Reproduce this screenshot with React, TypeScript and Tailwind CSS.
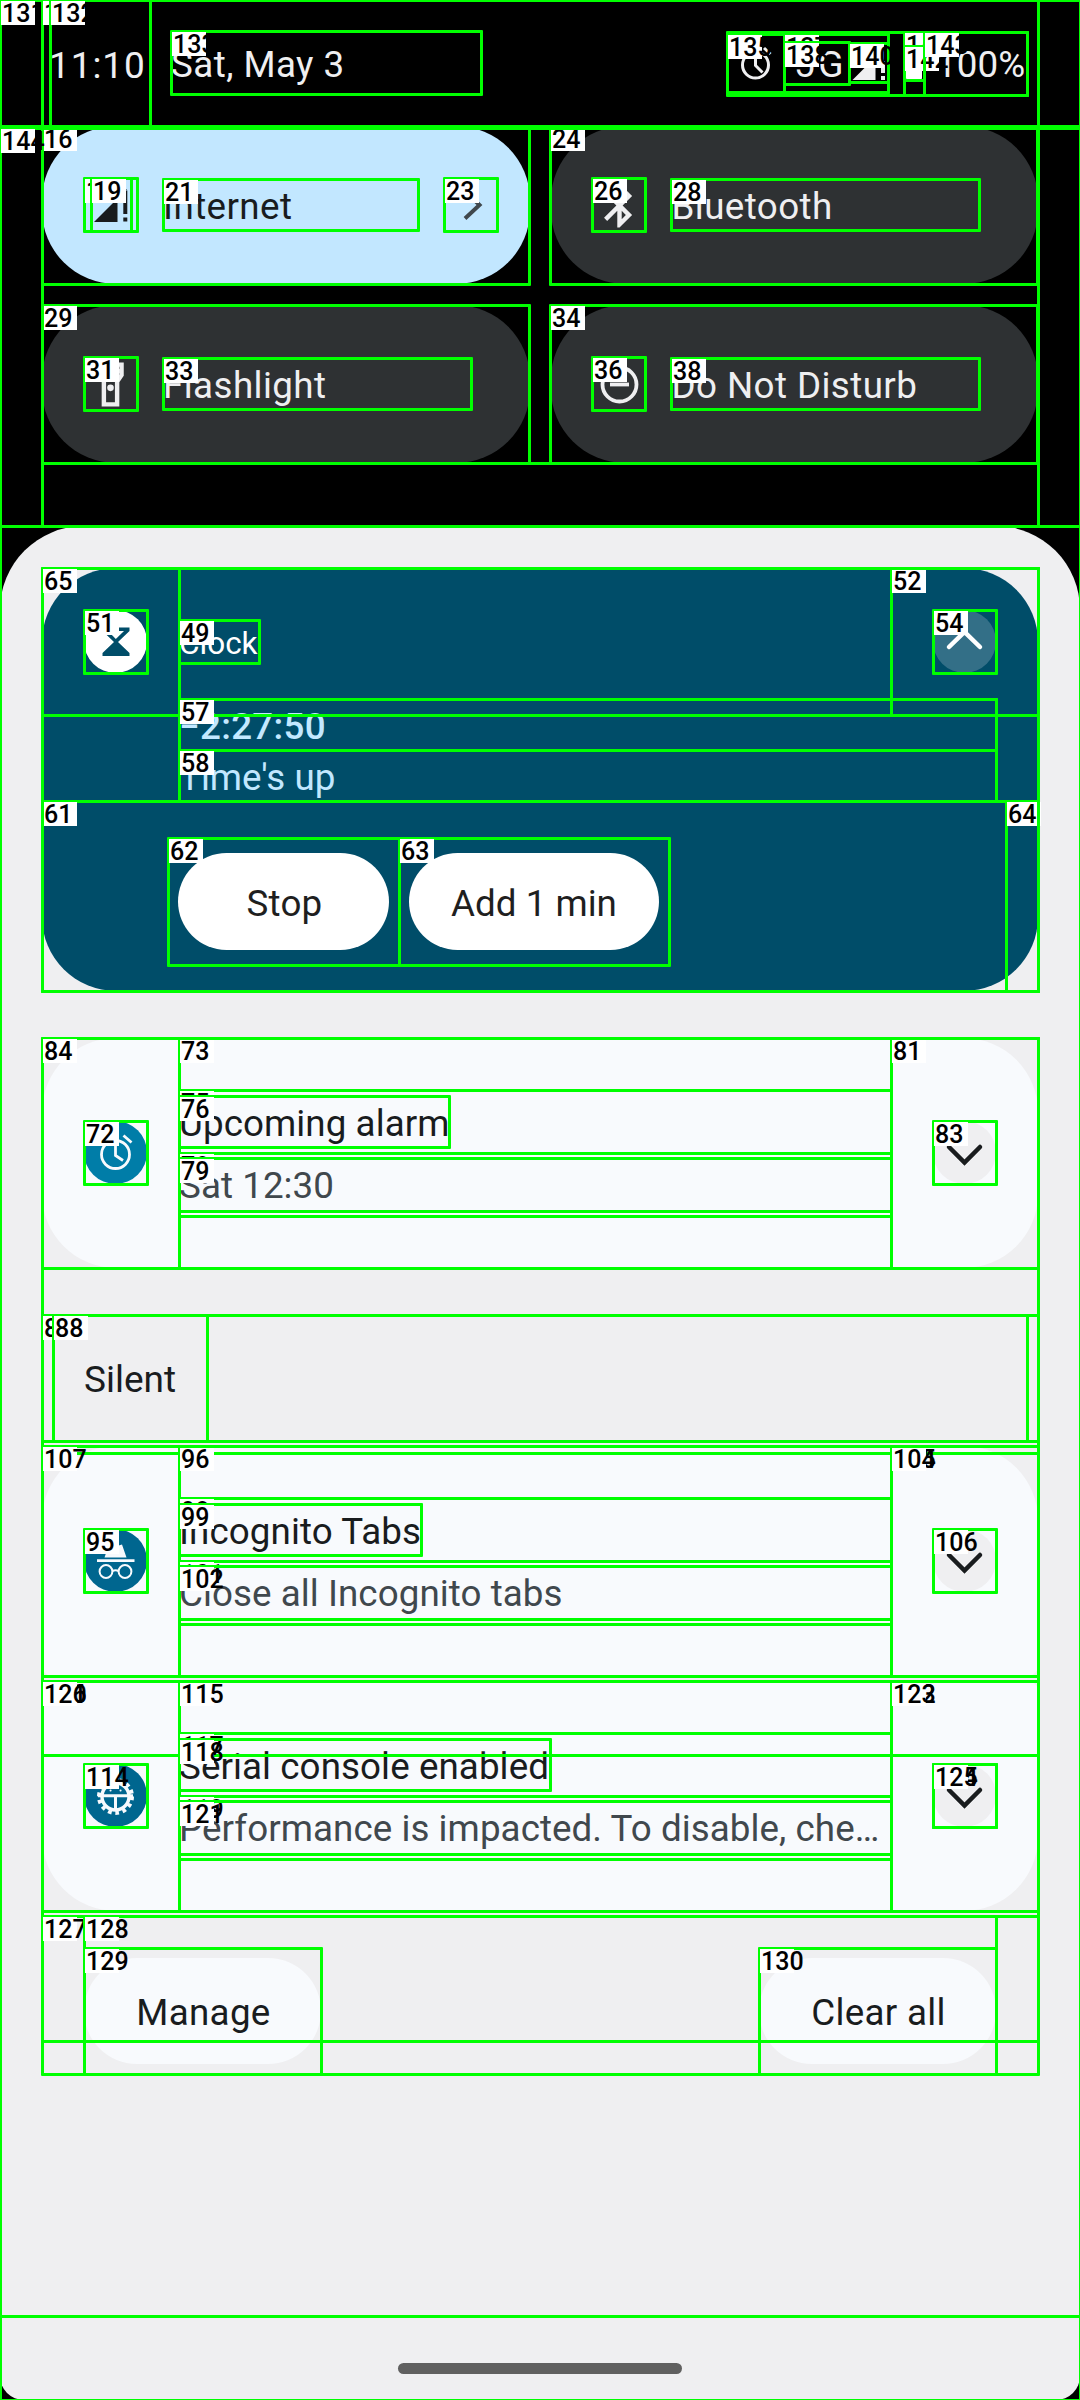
import React from "react";

type Box = [number, number, number, number, string?];

// Element bounds drawn over the shade: x1, y1, x2, y2, optional id. Later entries cover earlier ones.
const BOXES: Box[] = [
  [42, 126, 1038, 463],
  [42, 126, 529, 284, "16"],
  [84, 178, 137, 231, "18"],
  [91, 178, 131, 231, "19"],
  [163, 179, 418, 230, "21"],
  [444, 178, 497, 231, "23"],
  [550, 126, 1037, 284, "24"],
  [592, 178, 645, 231, "26"],
  [671, 179, 979, 230, "28"],
  [42, 305, 529, 463, "29"],
  [84, 357, 137, 410, "31"],
  [163, 358, 471, 409, "33"],
  [550, 305, 1037, 463, "34"],
  [592, 357, 645, 410, "36"],
  [671, 358, 979, 409, "38"],
  [42, 128, 1038, 526],
  [42, 1038, 1038, 1453],
  [42, 1268, 1038, 1755],
  [42, 1441, 1038, 2041],
  [179, 568, 891, 715],
  [179, 620, 259, 663, "49"],
  [84, 610, 147, 673, "51"],
  [891, 568, 1038, 715, "52"],
  [933, 610, 996, 673, "54"],
  [42, 568, 1038, 715],
  [179, 699, 996, 801],
  [179, 699, 996, 750, "57"],
  [179, 750, 996, 801, "58"],
  [42, 801, 1038, 991, "61"],
  [168, 838, 399, 965, "62"],
  [399, 838, 669, 965, "63"],
  [1006, 801, 1038, 991, "64"],
  [42, 568, 1038, 991, "65"],
  [84, 1121, 147, 1184, "72"],
  [179, 1038, 891, 1268, "73"],
  [179, 1090, 891, 1153, "75"],
  [179, 1096, 449, 1147, "76"],
  [179, 1153, 891, 1216, "78"],
  [179, 1158, 891, 1211, "79"],
  [891, 1038, 1038, 1268, "81"],
  [933, 1121, 996, 1184, "83"],
  [42, 1038, 1038, 1268, "84"],
  [42, 1315, 1038, 1441, "86"],
  [53, 1315, 1027, 1441, "87"],
  [53, 1315, 207, 1441, "88"],
  [84, 1529, 147, 1592, "95"],
  [179, 1446, 891, 1676, "96"],
  [179, 1498, 891, 1561, "98"],
  [179, 1504, 421, 1555, "99"],
  [179, 1561, 891, 1624, "101"],
  [179, 1566, 891, 1619, "102"],
  [891, 1446, 1038, 1676, "105"],
  [891, 1446, 1038, 1676, "104"],
  [933, 1529, 996, 1592, "106"],
  [42, 1446, 1038, 1676, "107"],
  [84, 1764, 147, 1827, "114"],
  [179, 1681, 891, 1911, "115"],
  [179, 1733, 891, 1796, "117"],
  [179, 1739, 550, 1790, "118"],
  [179, 1796, 891, 1859, "119"],
  [179, 1801, 891, 1854, "121"],
  [891, 1681, 1038, 1911, "122"],
  [891, 1681, 1038, 1911, "123"],
  [933, 1764, 996, 1827, "124"],
  [933, 1764, 996, 1827, "125"],
  [42, 1681, 1038, 1911, "121"],
  [42, 1681, 1038, 1911, "120"],
  [42, 1681, 1038, 1911, "126"],
  [42, 1916, 1038, 2074, "127"],
  [84, 1916, 996, 2074, "128"],
  [84, 1948, 321, 2074, "129"],
  [759, 1948, 996, 2074, "130"],
  [0, 526, 1080, 2316],
  [0, 0, 1080, 126, "131"],
  [42, 0, 1038, 126, "132"],
  [50, 0, 150, 126, "132"],
  [171, 31, 481, 94, "133"],
  [727, 32, 1027, 95],
  [727, 34, 888, 92],
  [727, 34, 784, 92, "135"],
  [784, 34, 888, 92, "137"],
  [784, 42, 849, 84, "138"],
  [849, 43, 888, 82, "140"],
  [904, 32, 924, 95, "141"],
  [904, 46, 924, 80, "142"],
  [924, 32, 1027, 95, "143"],
  [0, 128, 1080, 2400, "144"],
];

function BoundsOverlay() {
  return (
    <div className="pointer-events-none absolute inset-0">
      {BOXES.map(([x1, y1, x2, y2, id], i) => (
        <React.Fragment key={i}>
          <div
            className="absolute rounded-[1px] border-[3px] border-[#00ff00]"
            style={{ left: x1 - 1, top: y1 - 1, width: x2 - x1 + 3, height: y2 - y1 + 3 }}
          />
          {id && (
            <div
              className="absolute h-[24px] w-[34px] bg-white pl-px text-[25px] leading-[25px] font-medium whitespace-nowrap text-black"
              style={{ left: x1 + 1, top: y1 + 1 }}
            >
              {id}
            </div>
          )}
        </React.Fragment>
      ))}
    </div>
  );
}

function StatusBar() {
  return (
    <div className="flex h-[126px] shrink-0 items-center pl-[49px] text-[#efeff1]">
      <div className="w-[122px] pt-[5px] text-[37px] tracking-[0.9px]">11:10</div>
      <div className="pt-[5px] text-[36.75px] tracking-[0.44px]">Sat, May 3</div>
      <div className="mr-[53px] ml-auto flex h-full w-[300px] items-center">
        <svg className="h-[58px] w-[57px]" viewBox="0 0 57 58" fill="none" stroke="currentColor" strokeWidth="3">
          <circle cx="28.5" cy="31" r="13" />
          <path d="M28.5 22v9.5l7 7M37 14l6.5 6M20 14l-6.5 6" />
        </svg>
        <div className="w-[65px] pt-[3px] pl-[10px] text-[37px] tracking-[3.5px]">5G</div>
        <svg className="h-[39px] w-[39px]" viewBox="0 0 39 39" fill="currentColor">
          <path d="M3.5 36L32 7.500V12H26.500V36zM32 17h4v12h-4zM32 32h4v4h-4z" />
        </svg>
        <div className="ml-[18px] h-[33px] w-[16px] rounded-[2px] bg-white" />
        <div className="pt-[5px] pl-[14px] text-[36.75px] tracking-[0.1px]">100%</div>
      </div>
    </div>
  );
}

function Tile({ icon, label, active, chevron }: { icon: React.ReactNode; label: string; active?: boolean; chevron?: boolean }) {
  return (
    <div
      className={`flex h-[158px] items-center rounded-[74px] pr-[32px] pl-[42px] ${
        active ? "bg-[#c2e7ff] text-[#191c1e]" : "bg-[#2e3133] text-[#efeff1]"
      }`}
    >
      <div className="h-[53px] w-[53px]">{icon}</div>
      <div className="ml-[26px] pt-[5px] text-[36.75px] tracking-[0.42px]">{label}</div>
      {chevron && (
        <svg className="ml-auto h-[53px] w-[53px]" viewBox="0 0 53 53" fill="none" stroke="#40484d" strokeWidth="4">
          <path d="M20 12L34.500 26L20 39.500" />
        </svg>
      )}
    </div>
  );
}

const internetIcon = (
  <svg className="h-full w-full" viewBox="0 0 53 53" fill="currentColor">
    <path d="M10 43L43 10V11H33.500V43zM39.300 11.500h4v23.500h-4zM39.300 38.500h4v4h-4z" />
  </svg>
);
const bluetoothIcon = (
  <svg className="h-full w-full" viewBox="0 0 24 24" fill="currentColor">
    <path d="M17.71 7.71L12 2h-1v7.590L6.410 5 5 6.410 10.590 12 5 17.590 6.410 19 11 14.410V22h1l5.710-5.710-4.300-4.290 4.300-4.290zM13 5.830l1.880 1.880L13 9.590V5.830zm1.880 10.460L13 18.170v-3.760l1.880 1.880z" />
  </svg>
);
const flashlightIcon = (
  <svg className="h-full w-full" viewBox="0 0 24 24" fill="currentColor">
    <path fillRule="evenodd" d="M6 2h12v6l-2 3v11H8V11L6 8zM8 4v1h8V4zM8 7v.4l2 3V20h4v-9.600l2-3V7z" />
    <circle cx="12" cy="13.500" r="1.500" />
  </svg>
);
const dndIcon = (
  <svg className="h-full w-full" viewBox="0 0 53 53" fill="none" stroke="currentColor" strokeWidth="3.800">
    <circle cx="26.500" cy="26.500" r="17" />
    <path d="M17 26.500h19" />
  </svg>
);

const circle = "h-[63px] w-[63px] shrink-0 rounded-full";

function Expander({ up }: { up?: boolean }) {
  return (
    <svg
      className={`${circle} ml-auto ${up ? "bg-[#336f87] text-white" : "bg-[#efeff1] text-[#191c1e]"}`}
      viewBox="0 0 63 63"
      fill="none"
      stroke="currentColor"
      strokeWidth="4.500"
      strokeLinecap="round"
    >
      <path d={up ? "M16 37L31.500 22L47 37" : "M16 26L31.500 41.500L47 26"} />
    </svg>
  );
}

function ClockCard() {
  return (
    <div className="h-[423px] rounded-[74px] bg-[#004d69]">
      <div className="flex h-[131px] px-[42px] pt-[42px]">
        <svg className={`${circle} bg-white text-[#004d69]`} viewBox="0 0 63 63" fill="currentColor">
          <path d="M18.500 17.500h27v3.500L34 32l11.500 11v3h-27v-3L30 32L18.500 21z" />
          <path d="M24 21h16L31.800 29z" fill="#fff" />
        </svg>
        <div className="ml-[32px] text-[31.500px] leading-[67px] text-white">Clock</div>
        <Expander up />
      </div>
      <div className="h-[102px] pl-[137px] text-[36.75px] leading-[55px] text-[#c2e8ff]">
        <div className="h-[51px] font-medium tracking-[0.3px]">−2:27:50</div>
        <div className="h-[51px]">Time's up</div>
      </div>
      <div className="flex gap-[20px] pt-[52px] pl-[136px] text-[36.75px] text-[#1f1f1f]">
        <button className="h-[97px] w-[211px] rounded-full bg-white pt-[5px] pl-[2px] tracking-[0.2px]">Stop</button>
        <button className="h-[97px] w-[250px] rounded-full bg-white pt-[5px]">Add 1 min</button>
      </div>
    </div>
  );
}

function NotificationCard({ icon, title, text, shape }: { icon: React.ReactNode; title: string; text: string; shape: string }) {
  return (
    <div className={`flex h-[230px] bg-[#f8fafd] px-[42px] ${shape}`}>
      <div className="mt-[83px]">{icon}</div>
      <div className="ml-[32px] w-[711px] pt-[55px] text-[36.75px] leading-[62px] whitespace-nowrap">
        <div className="text-[#191c1e] tracking-[0.08px]">{title}</div>
        <div className="text-[#40484d] tracking-[0.06px]">{text}</div>
      </div>
      <div className="mt-[83px] ml-auto">
        <Expander />
      </div>
    </div>
  );
}

const alarmIcon = (
  <svg className={`${circle} bg-[#007da8]`} viewBox="0 0 63 63" fill="none" stroke="#f8fafd" strokeWidth="2.800">
    <circle cx="31.500" cy="33.500" r="14" />
    <path d="M31.500 24.500v10l7.500 5M39.500 14.500l8 7M23.500 14.500l-8 7" />
  </svg>
);
const incognitoIcon = (
  <svg className={`${circle} bg-[#00668f]`} viewBox="0 0 63 63" fill="none" stroke="#f8fafd" strokeWidth="2">
    <path d="M20.500 28.500L25 15.500q6.500 2.500 13 0l4.500 13z" fill="#f8fafd" stroke="none" />
    <path d="M13 31.700h37.500" strokeWidth="2.800" />
    <circle cx="22" cy="42.500" r="6.400" />
    <circle cx="41" cy="42.500" r="6.400" />
    <path d="M28.400 42q3.100-1.600 6.200 0" />
  </svg>
);
const gearIcon = (
  <svg className={`${circle} bg-[#00668f]`} viewBox="0 0 63 63" fill="none" stroke="#f8fafd">
    <circle cx="31.500" cy="32.500" r="16.500" strokeWidth="4" strokeDasharray="3.700 3.705" />
    <circle cx="31.500" cy="32.500" r="13.500" strokeWidth="3.400" />
    <path d="M14 31.700h35M31.500 32v14" strokeWidth="3" />
    <path d="M26.500 26.500h.1M36.500 26.500h.1" strokeWidth="2" strokeLinecap="round" />
  </svg>
);

export default function App() {
  return (
    <div className="relative flex h-[2400px] w-[1080px] flex-col overflow-hidden bg-black font-['Roboto',sans-serif] leading-none">
      <StatusBar />
      <div className="grid h-[400px] shrink-0 grid-cols-2 content-start gap-[21px] px-[42px]">
        <Tile icon={internetIcon} label="Internet" active chevron />
        <Tile icon={bluetoothIcon} label="Bluetooth" />
        <Tile icon={flashlightIcon} label="Flashlight" />
        <Tile icon={dndIcon} label="Do Not Disturb" />
      </div>
      <div className="flex flex-1 flex-col rounded-t-[84px] rounded-b-[24px] bg-[#efeff1] px-[42px] pt-[42px]">
        <ClockCard />
        <div className="mt-[47px]">
          <NotificationCard icon={alarmIcon} title="Upcoming alarm" text="Sat 12:30" shape="rounded-[74px]" />
        </div>
        <div className="mt-[47px] flex h-[126px] items-center pt-[3px] pl-[42px] text-[37px] text-[#191c1e]">Silent</div>
        <div className="mt-[5px] flex flex-col gap-[5px]">
          <NotificationCard
            icon={incognitoIcon}
            title="Incognito Tabs"
            text="Close all Incognito tabs"
            shape="rounded-t-[74px] rounded-b-[10px]"
          />
          <NotificationCard
            icon={gearIcon}
            title="Serial console enabled"
            text="Performance is impacted. To disable, che…"
            shape="rounded-t-[10px] rounded-b-[74px]"
          />
        </div>
        <div className="mt-[47px] flex justify-between px-[42px] text-[36.75px] tracking-[0.3px] text-[#191c1e]">
          <button className="h-[106px] w-[237px] rounded-full bg-[#f8fafd] pt-[5px] pl-[2px]">Manage</button>
          <button className="h-[106px] w-[237px] rounded-full bg-[#f8fafd] pt-[5px] pl-[2px]">Clear all</button>
        </div>
        <div className="mx-auto mt-auto mb-[26px] h-[11px] w-[284px] rounded-full bg-[#606060]" />
      </div>
      <BoundsOverlay />
    </div>
  );
}
